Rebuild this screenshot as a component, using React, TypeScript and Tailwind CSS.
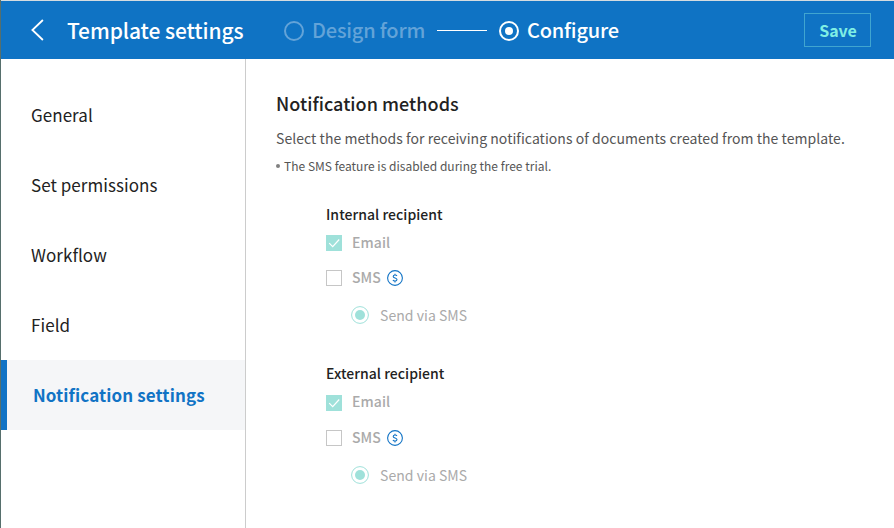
import React from "react";

const menu = ["General", "Set permissions", "Workflow", "Field"];

function DollarIcon() {
  return (
    <svg className="ml-[6px] size-4" viewBox="0 0 16 16" fill="none" stroke="#1173c5">
      <circle cx="8" cy="8" r="7.4" strokeWidth="1.1" />
      <path d="M10 5.9C9.6 5.3 8.9 5 8.1 5C7 5 6.2 5.6 6.2 6.4C6.2 8.3 10 7.6 10 9.6C10 10.5 9.1 11.1 8 11.1C7.1 11.1 6.3 10.7 5.9 10M8 3.7V5M8 11.1V12.4" strokeWidth="1.1" />
    </svg>
  );
}

function Recipient({ title, checkClass, smsClass }: { title: string; checkClass: string; smsClass: string }) {
  return (
    <section className="ml-[50px] text-[14px] leading-5 text-[#aaaaaa]">
      <h2 className="h-5 leading-[18px] font-medium tracking-[0.04px] text-[#222222]">{title}</h2>
      <div className="mt-2 flex h-5 items-start font-medium">
        <span className={`flex size-4 shrink-0 items-center justify-center bg-[#9fe1da] ${checkClass}`}>
          <svg className="size-4" viewBox="0 0 16 16" fill="none" stroke="white" strokeWidth="1.2">
            <path d="M3.2 8.2L6.7 11.7L13.2 4.5" />
          </svg>
        </span>
        <span className="ml-[10px] leading-[18px] tracking-[0.08px]">Email</span>
      </div>
      <div className={`flex h-5 items-center font-medium ${smsClass}`}>
        <span className="size-4 shrink-0 border border-[#c6c6c6] bg-white" />
        <span className="ml-[10px] h-5 w-[29px] leading-[18px]">SMS</span>
        <DollarIcon />
      </div>
      <div className="ml-[25px] mt-[17px] flex h-5 items-center">
        <svg className="size-[18px]" viewBox="0 0 18 18">
          <circle cx="9" cy="9" r="8.4" fill="none" stroke="#9fe1da" />
          <circle cx="9" cy="9" r="5" fill="#9fe1da" />
        </svg>
        <span className="ml-[11px] tracking-[0.04px]">Send via SMS</span>
      </div>
    </section>
  );
}

export default function App() {
  return (
    <div className="flex h-[528px] w-[894px] overflow-hidden bg-white font-['Noto_Sans_CJK_KR',sans-serif] whitespace-nowrap">
      <div className="w-px shrink-0 bg-[#566f6c]" />
      <div className="flex min-w-0 flex-1 flex-col">
        <header className="flex h-[59px] shrink-0 items-center border-t border-[#d5dce0] bg-[#0f73c4] font-medium text-white">
          <svg className="ml-[29px] h-[22px] w-[14px]" viewBox="0 0 14 22" fill="none" stroke="white" strokeWidth="1.8">
            <path d="M12.9 1L2.4 11L12.9 21" />
          </svg>
          <h1 className="ml-[23px] w-[216px] text-[21px] leading-8 tracking-[-0.08px]">Template settings</h1>
          <span className="mt-0.5 ml-px size-5 rounded-full border-2 border-[#63a3d8]" />
          <span className="ml-[8px] w-[125px] text-[20px] leading-8 tracking-[-0.2px] text-[#63a3d8]">Design form</span>
          <span className="h-px w-[50px] bg-white" />
          <span className="mt-0.5 ml-3 flex size-5 items-center justify-center rounded-full border-2 border-white">
            <span className="size-2 rounded-full bg-white" />
          </span>
          <span className="ml-2 text-[20px] leading-8 tracking-[-0.2px]">Configure</span>
          <button className="mr-[23px] ml-auto h-[34px] w-[67px] border border-[#40a5d0] pl-px text-[16px] leading-8 font-bold tracking-[-0.1px] text-[#80efe4]">Save</button>
        </header>
        <div className="flex min-h-0 flex-1">
          <nav className="w-[245px] shrink-0 border-r border-[#cccccc] pt-[21px] text-[17px] text-[#222222]">
            {menu.map((item) => (
              <div key={item} className="flex h-[70px] items-center pl-[30px] tracking-[0.05px]">{item}</div>
            ))}
            <div className="flex h-[70px] items-center border-l-[6px] border-[#1173c5] bg-[#f5f6f8] pl-[26px] font-bold tracking-[0.1px] text-[#1173c5]">Notification settings</div>
          </nav>
          <main className="pt-[29px] pl-[30px]">
            <h1 className="text-[18px] leading-[30px] font-medium tracking-[0.05px] text-[#222222]">Notification methods</h1>
            <p className="mt-[8px] mb-[6px] text-[14px] leading-6 tracking-[0.048px] text-[#555555]">Select the methods for receiving notifications of documents created from the template.</p>
            <div className="flex h-5 items-center text-[12px] tracking-[0.02px] text-[#555555]">
              <span className="mr-1 size-1 rounded-full bg-[#808080]" />
              The SMS feature is disabled during the free trial.
            </div>
            <div className="h-[29px]" />
            <Recipient title="Internal recipient" checkClass="mt-[2px]" smsClass="mt-[15px]" />
            <div className="h-[39px]" />
            <Recipient title="External recipient" checkClass="mt-[3px]" smsClass="mt-4" />
          </main>
        </div>
      </div>
    </div>
  );
}
